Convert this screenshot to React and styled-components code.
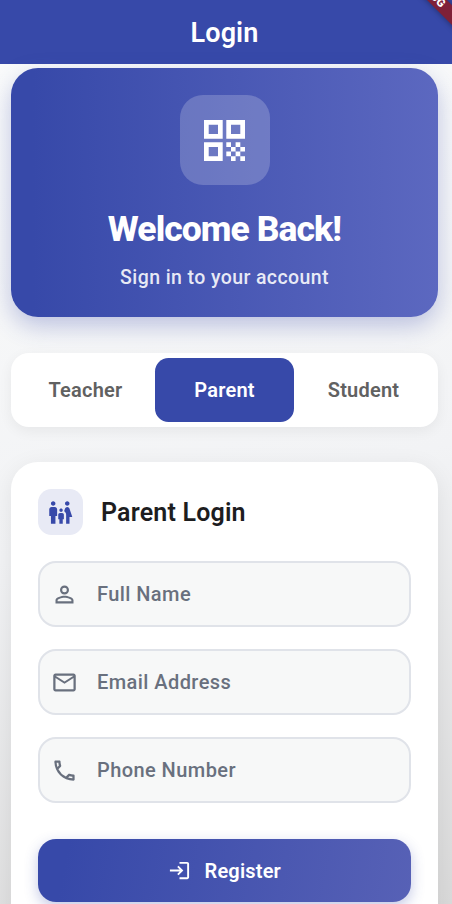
import React from "react";
import styled, { createGlobalStyle } from "styled-components";
import {
  MdFamilyRestroom,
  MdPersonOutline,
  MdMailOutline,
  MdOutlinePhone,
  MdLogin,
} from "react-icons/md";

const GlobalStyle = createGlobalStyle`
  * { box-sizing: border-box; }
  html, body { margin: 0; padding: 0; overflow: hidden; }
  body { font-family: Roboto, sans-serif; }
`;

const Screen = styled.div`
  position: relative;
  width: 452px;
  height: 904px;
  overflow: hidden;
  background: linear-gradient(165deg, #fbfcfc 0%, #f2f3f5 55%, #dadada 100%);
`;

const AppBar = styled.header`
  height: 63.5px;
  display: flex;
  align-items: center;
  justify-content: center;
  background: #3749a9;
  padding: 2px 3px 0 0;
`;

const BarTitle = styled.h1`
  margin: 0;
  color: #fff;
  font-size: 27px;
  line-height: 32px;
  font-weight: 600;
  letter-spacing: 0.1px;
`;

const DebugRibbon = styled.div`
  position: absolute;
  top: -14px;
  left: 369.5px;
  width: 120px;
  height: 13.5px;
  display: flex;
  align-items: center;
  justify-content: center;
  transform: rotate(45deg);
  background: #7f2038;
  box-shadow: 0 0 6px rgba(0, 0, 0, 0.4);
  color: #fff;
  font-size: 11.5px;
  line-height: 13px;
  font-weight: 900;
`;

const Content = styled.main`
  display: flex;
  flex-direction: column;
  padding: 4.5px 14px 0 11px;
`;

const Hero = styled.section`
  height: 249px;
  flex: none;
  display: flex;
  flex-direction: column;
  align-items: center;
  padding-top: 27px;
  border-radius: 27px;
  background: linear-gradient(90deg, #3749a9 5%, #5c68c0 100%);
  box-shadow: 0 9px 23px rgba(55, 73, 169, 0.3);
`;

const HeroBadge = styled.div`
  width: 90px;
  height: 90px;
  display: flex;
  align-items: center;
  justify-content: center;
  border-radius: 23px;
  background: rgba(255, 255, 255, 0.2);
`;

const HeroTitle = styled.h2`
  margin: 23px 0 0;
  color: #fff;
  font-size: 35.5px;
  line-height: 43px;
  font-weight: 800;
  letter-spacing: -0.95px;
`;

const HeroText = styled.p`
  margin: 15px 0 0;
  color: rgba(255, 255, 255, 0.88);
  font-size: 19.5px;
  line-height: 24px;
  font-weight: 500;
  letter-spacing: 0.4px;
`;

const Tabs = styled.nav`
  height: 74px;
  flex: none;
  display: grid;
  grid-template-columns: repeat(3, 1fr);
  margin-top: 35.5px;
  padding: 5px;
  border-radius: 18px;
  background: #fff;
  box-shadow: 0 4px 14px rgba(0, 0, 0, 0.06);
`;

const Tab = styled.button`
  border: 0;
  padding: 0;
  border-radius: 13.5px;
  background: ${(p) => (p.$active ? "#3749a9" : "transparent")};
  color: ${(p) => (p.$active ? "#fff" : "#616161")};
  font: 600 20px/24px Roboto, sans-serif;
  letter-spacing: 0.22px;
`;

const FormCard = styled.section`
  height: 520px;
  flex: none;
  margin-top: 35.5px;
  padding: 27px 27px 0;
  border-radius: 27px;
  background: #fff;
  box-shadow: 0 6px 24px rgba(0, 0, 0, 0.08);
`;

const FormHeader = styled.div`
  display: flex;
  align-items: center;
  gap: 18px;
  height: 46px;
`;

const HeaderBadge = styled.div`
  width: 45px;
  height: 46px;
  display: flex;
  align-items: center;
  justify-content: center;
  border-radius: 13.5px;
  background: #e8eaf5;
  color: #3749a9;
`;

const FormTitle = styled.h3`
  margin: 0;
  padding-top: 1px;
  color: #1d1d1f;
  font-size: 25px;
  line-height: 30px;
  font-weight: 600;
  letter-spacing: 0.19px;
`;

const Fields = styled.div`
  display: flex;
  flex-direction: column;
  gap: 22px;
  margin-top: 26px;
`;

const Field = styled.label`
  height: 66px;
  display: flex;
  align-items: center;
  gap: 19px;
  padding-left: 11px;
  border: 2px solid #e0e3e9;
  border-radius: 18px;
  background: #f7f8f8;
  color: #69707e;
  font-size: 20px;
  font-weight: 500;
  letter-spacing: 0.43px;
`;

const SubmitButton = styled.button`
  width: 100%;
  height: 63px;
  display: flex;
  align-items: center;
  justify-content: center;
  gap: 13.5px;
  margin-top: 36px;
  border: 0;
  border-radius: 18px;
  background: linear-gradient(100deg, #3749a9 8%, #5761b6 100%);
  box-shadow: 0 5px 14px rgba(55, 73, 169, 0.3);
  color: #fff;
  font: 600 20px/24px Roboto, sans-serif;
  letter-spacing: 0.18px;
`;

const QrIcon = () => (
  <svg width="41" height="41" viewBox="0 0 41 41" fill="#fff">
    <path
      fillRule="evenodd"
      d="M0 0h18.7v18.7H0zM4.7 4.7v9.3H14V4.7zM22.3 0H41v18.7H22.3zM27 4.7v9.3h9.3V4.7zM0 22.3h18.7V41H0zM4.7 27v9.3H14V27z"
    />
    <path d="M22.3 22.3H27V27h-4.7zM31.6 22.3h4.7V27h-4.7zM27 27h4.6v4.6H27zM36.3 27H41v4.6h-4.7zM22.3 31.6H27v4.7h-4.7zM31.6 31.6h4.7v4.7h-4.7zM27 36.3h4.6V41H27zM36.3 36.3H41V41h-4.7z" />
  </svg>
);

const fields = [
  { label: "Full Name", Icon: MdPersonOutline },
  { label: "Email Address", Icon: MdMailOutline },
  { label: "Phone Number", Icon: MdOutlinePhone },
];

export default function App() {
  return (
    <Screen>
      <GlobalStyle />
      <AppBar>
        <BarTitle>Login</BarTitle>
      </AppBar>
      <Content>
        <Hero>
          <HeroBadge>
            <QrIcon />
          </HeroBadge>
          <HeroTitle>Welcome Back!</HeroTitle>
          <HeroText>Sign in to your account</HeroText>
        </Hero>
        <Tabs>
          {["Teacher", "Parent", "Student"].map((name) => (
            <Tab key={name} $active={name === "Parent"}>
              {name}
            </Tab>
          ))}
        </Tabs>
        <FormCard>
          <FormHeader>
            <HeaderBadge>
              <MdFamilyRestroom size={27} />
            </HeaderBadge>
            <FormTitle>Parent Login</FormTitle>
          </FormHeader>
          <Fields>
            {fields.map(({ label, Icon }) => (
              <Field key={label}>
                <Icon size={27} />
                {label}
              </Field>
            ))}
          </Fields>
          <SubmitButton>
            <MdLogin size={23} />
            Register
          </SubmitButton>
        </FormCard>
      </Content>
      <DebugRibbon>DEBUG</DebugRibbon>
    </Screen>
  );
}
